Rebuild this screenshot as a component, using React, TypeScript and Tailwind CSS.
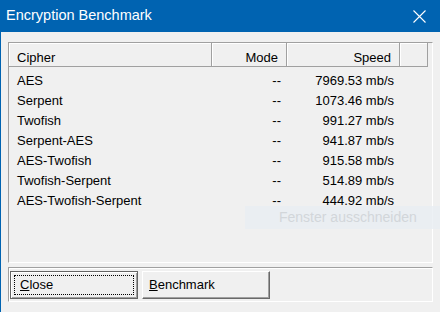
import React from "react";

const rows = [
  { name: "AES", mode: "--", speed: "7969.53 mb/s" },
  { name: "Serpent", mode: "--", speed: "1073.46 mb/s" },
  { name: "Twofish", mode: "--", speed: "991.27 mb/s" },
  { name: "Serpent-AES", mode: "--", speed: "941.87 mb/s" },
  { name: "AES-Twofish", mode: "--", speed: "915.58 mb/s" },
  { name: "Twofish-Serpent", mode: "--", speed: "514.89 mb/s" },
  { name: "AES-Twofish-Serpent", mode: "--", speed: "444.92 mb/s" },
];

const HeaderCell: React.FC<{ w: string; align?: string; children?: React.ReactNode }> = ({ w, align = "text-left", children }) => (
  <div
    className={`${w} ${align} h-full px-[8px] pt-[7px] leading-[15px] border-r border-[#a0a0a0] shadow-[inset_1px_0_0_#fff]`}
  >
    {children}
  </div>
);

const App: React.FC = () => {
  return (
    <div className="relative w-[440px] h-[312px] overflow-hidden bg-[#f0f0f0] border-l border-[#0063b1] font-['Liberation_Sans',Arial,sans-serif] text-[13px] text-black">
      {/* title bar */}
      <div className="h-[32px] bg-[#0063b1] flex items-center justify-between pl-[5px] pr-[14px]">
        <span className="text-white text-[14.5px]">Encryption Benchmark</span>
        <svg width="13" height="13" viewBox="0 0 13 13" className="mt-[1px]">
          <path d="M0.5 0.5 L12.5 12.5 M12.5 0.5 L0.5 12.5" stroke="#fff" strokeWidth="1.1" fill="none" />
        </svg>
      </div>

      <div className="pl-[7px] pt-[10px]">
        {/* list view */}
        <div className="w-[425px] h-[221px] border-t border-l border-[#a0a0a0] border-b border-r border-b-white border-r-white">
          <div className="flex h-[24px] w-[419px] border-b border-[#a0a0a0] shadow-[inset_0_1px_0_#fff]">
            <HeaderCell w="w-[203px]">Cipher</HeaderCell>
            <HeaderCell w="w-[75px]" align="text-right">Mode</HeaderCell>
            <HeaderCell w="w-[113px]" align="text-right">Speed</HeaderCell>
            <HeaderCell w="w-[28px]" />
          </div>
          <div className="pt-[4px]">
            {rows.map((r) => (
              <div key={r.name} className="flex h-[20px] leading-[20px]">
                <div className="w-[203px] pl-[8px]">{r.name}</div>
                <div className="w-[75px] pr-[6px] text-right">{r.mode}</div>
                <div className="w-[113px] pr-[6px] text-right">{r.speed}</div>
              </div>
            ))}
          </div>
        </div>

        {/* button panel */}
        <div className="mt-[4px] w-[425px] h-[35px] border-t border-l border-[#a0a0a0] border-b border-r border-b-white border-r-white shadow-[inset_1px_1px_0_#fff] flex items-center gap-[4px] pl-[1px] pt-[1px]">
          <button className="relative w-[128px] h-[28px] border border-[#646464] bg-[#f0f0f0] shadow-[inset_1px_1px_0_#fff,inset_-1px_-1px_0_#a0a0a0] text-left pl-[9px]">
            <span className="absolute inset-[3px] border border-dotted border-black" />
            <span className="relative"><span className="underline">C</span>lose</span>
          </button>
          <button className="w-[128px] h-[28px] border border-t-white border-l-white border-b-[#696969] border-r-[#696969] bg-[#f0f0f0] shadow-[inset_-1px_-1px_0_#a0a0a0] text-left pl-[6px]">
            <span className="underline">B</span>enchmark
          </button>
        </div>
      </div>

      {/* hover hint overlay */}
      <div className="absolute left-[244px] top-[206px] w-[200px] h-[23px] bg-[#e8eef3]/80 text-[#d2d6da] text-[14px] leading-[23px] pl-[34px]">
        Fenster ausschneiden
      </div>
    </div>
  );
};

export default App;
